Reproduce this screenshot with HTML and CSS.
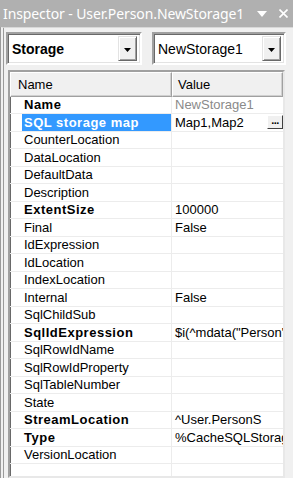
FILE: index.html
```html
<!DOCTYPE html>
<html>
<head>
<meta charset="utf-8">
<link rel="stylesheet" href="styles.css">
</head>
<body>
<div class="window">
  <div class="titlebar">
    <span class="title">Inspector - User.Person.NewStorage1</span>
    <span class="tb-icons">
      <svg width="10" height="6" viewBox="0 0 10 6"><path d="M0 0H10L5 6Z" fill="#fff"/></svg>
      <svg width="9" height="9" viewBox="0 0 9 9"><path d="M0.5 0.5L8.5 8.5M8.5 0.5L0.5 8.5" stroke="#fff" stroke-width="1.6"/></svg>
    </span>
  </div>
  <div class="panel">
    <div class="combos">
      <div class="combo combo-a">
        <span class="combo-text bold">Storage</span>
        <span class="combo-btn"><svg width="7" height="4" viewBox="0 0 7 4"><path d="M0 0H7L3.5 4Z" fill="#000"/></svg></span>
      </div>
      <div class="combo combo-b">
        <span class="combo-text">NewStorage1</span>
        <span class="combo-btn"><svg width="7" height="4" viewBox="0 0 7 4"><path d="M0 0H7L3.5 4Z" fill="#000"/></svg></span>
      </div>
    </div>
    <div class="grid">
      <div class="header">
        <div class="hcell hname">Name</div>
        <div class="hcell hvalue">Value</div>
      </div>
      <div class="row"><div class="name b">Name</div><div class="value ro">NewStorage1</div></div>
      <div class="row sel"><div class="name b"><span class="hl">SQL storage map</span></div><div class="value">Map1,Map2<span class="dots">...</span></div></div>
      <div class="row"><div class="name">CounterLocation</div><div class="value"></div></div>
      <div class="row"><div class="name">DataLocation</div><div class="value"></div></div>
      <div class="row"><div class="name">DefaultData</div><div class="value"></div></div>
      <div class="row"><div class="name">Description</div><div class="value"></div></div>
      <div class="row"><div class="name b">ExtentSize</div><div class="value">100000</div></div>
      <div class="row"><div class="name">Final</div><div class="value">False</div></div>
      <div class="row"><div class="name">IdExpression</div><div class="value"></div></div>
      <div class="row"><div class="name">IdLocation</div><div class="value"></div></div>
      <div class="row"><div class="name">IndexLocation</div><div class="value"></div></div>
      <div class="row"><div class="name">Internal</div><div class="value">False</div></div>
      <div class="row"><div class="name">SqlChildSub</div><div class="value"></div></div>
      <div class="row"><div class="name b">SqlIdExpression</div><div class="value">$i(^mdata("Person"))</div></div>
      <div class="row"><div class="name">SqlRowIdName</div><div class="value"></div></div>
      <div class="row"><div class="name">SqlRowIdProperty</div><div class="value"></div></div>
      <div class="row"><div class="name">SqlTableNumber</div><div class="value"></div></div>
      <div class="row"><div class="name">State</div><div class="value"></div></div>
      <div class="row"><div class="name b">StreamLocation</div><div class="value">^User.PersonS</div></div>
      <div class="row"><div class="name b">Type</div><div class="value">%CacheSQLStorage</div></div>
      <div class="row"><div class="name">VersionLocation</div><div class="value"></div></div>
      <div class="row filler"><div class="name"></div><div class="value"></div></div>
    </div>
  </div>
</div>
</body>
</html>
```
FILE: styles.css
```css
html, body {
  margin: 0;
  padding: 0;
  background: #f0f0f0;
}
.window {
  width: 293px;
  height: 478px;
  overflow: hidden;
  display: flex;
  flex-direction: column;
  font-family: "Liberation Sans", Arial, sans-serif;
  color: #000;
}
.titlebar {
  height: 27px;
  flex: none;
  background: #b0b0b0;
  display: flex;
  align-items: center;
  justify-content: space-between;
  padding: 0 3px 0 3px;
  box-sizing: border-box;
}
.title {
  font-family: "Noto Sans", sans-serif;
  font-size: 14px;
  color: #fff;
  white-space: nowrap;
  letter-spacing: -0.1px;
}
.tb-icons {
  display: flex;
  align-items: center;
  gap: 12px;
  padding-right: 2px;
}
.panel {
  flex: 1;
  border-left: 4px double #9a9a9a;
  border-top: 1px solid #d8d8d8;
  display: flex;
  flex-direction: column;
  min-height: 0;
}
.combos {
  display: flex;
  gap: 10px;
  padding: 4px 0 0 2px;
  flex: none;
}
.combo {
  height: 33px;
  box-sizing: border-box;
  border: 2px solid;
  border-color: #a0a0a0 #ffffff #ffffff #a0a0a0;
  box-shadow: inset 1px 1px 0 #696969, inset -1px -1px 0 #e3e3e3;
  background: #fff;
  display: flex;
  align-items: center;
  padding: 0 3px 0 4px;
}
.combo-a { width: 136px; }
.combo-b { width: 134px; }
.combo-text {
  flex: 1;
  font-size: 14px;
  white-space: nowrap;
}
.combo-text.bold { font-weight: bold; }
.combo-btn {
  width: 19px;
  height: 25px;
  box-sizing: border-box;
  background: #f0f0f0;
  border: 1px solid;
  border-color: #e3e3e3 #696969 #696969 #e3e3e3;
  box-shadow: inset 1px 1px 0 #fff, inset -1px -1px 0 #a0a0a0;
  display: flex;
  align-items: center;
  justify-content: center;
  padding-top: 2px;
}
.grid {
  margin: 5px 0 0 4px;
  width: 277px;
  flex: 1;
  box-sizing: border-box;
  border: 2px solid;
  border-color: #a0a0a0 #e8e8e8 #e8e8e8 #a0a0a0;
  box-shadow: inset 1px 1px 0 #696969;
  background: #fff;
  display: flex;
  flex-direction: column;
  font-size: 13px;
  overflow: hidden;
}
.header {
  display: grid;
  grid-template-columns: 162px 1fr;
  height: 24.5px;
  flex: none;
  background: #f0f0f0;
}
.hcell {
  display: flex;
  align-items: center;
  border: 1px solid;
  border-color: #fff #a0a0a0 #a0a0a0 #fff;
  box-shadow: inset -1px -1px 0 #d0d0d0;
}
.hname { padding-left: 7px; }
.hvalue { padding-left: 5px; }
.row {
  display: grid;
  grid-template-columns: 162px 1fr;
  height: 17.5px;
  flex: none;
  box-sizing: border-box;
  border-bottom: 1px solid #ececec;
}
.row.filler {
  flex: 1;
  border-bottom: none;
}
.name {
  padding-left: 14px;
  border-right: 1px solid #ececec;
  display: flex;
  align-items: center;
  white-space: nowrap;
  overflow: hidden;
}
.name.b {
  font-weight: bold;
  letter-spacing: 0.5px;
}
.hl {
  display: flex;
  align-items: center;
  align-self: stretch;
  flex: 1;
  background: #3399ff;
  color: #fff;
  padding-left: 2px;
  margin-left: -2px;
}
.value {
  padding-left: 3px;
  display: flex;
  align-items: center;
  white-space: nowrap;
  overflow: hidden;
  position: relative;
}
.value.ro { color: #8a8a8a; }
.dots {
  position: absolute;
  right: 0;
  top: 1px;
  width: 16px;
  height: 14px;
  box-sizing: border-box;
  background: #f0f0f0;
  border: 1px solid;
  border-color: #fff #404040 #404040 #fff;
  font-weight: bold;
  font-size: 11px;
  line-height: 8px;
  text-align: center;
  letter-spacing: -0.5px;
}
```
